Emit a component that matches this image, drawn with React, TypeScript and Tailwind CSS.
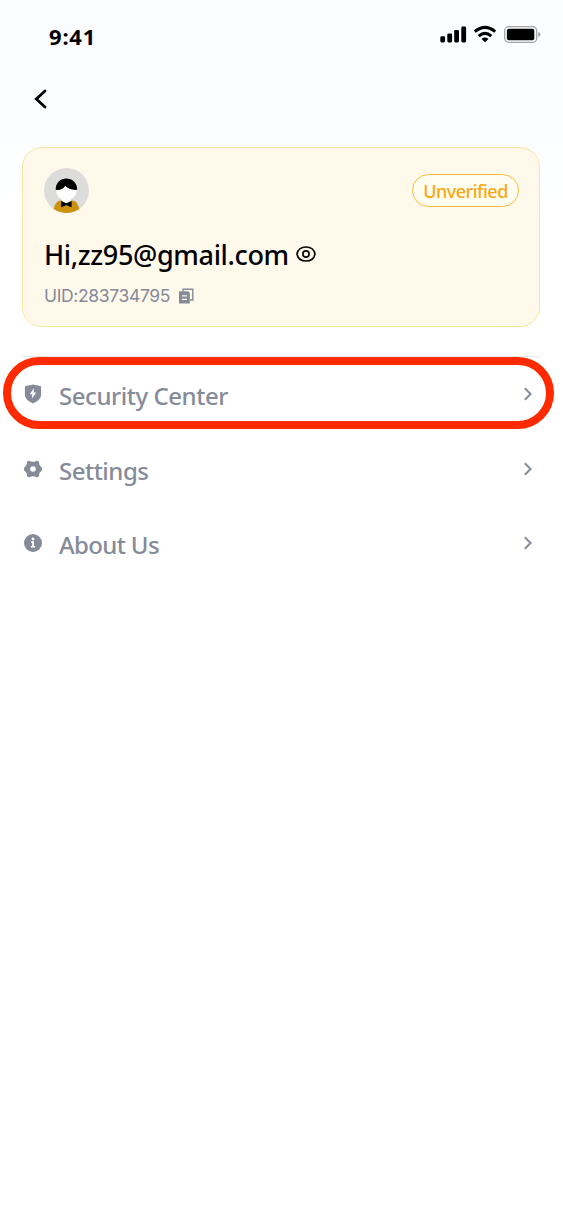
import type { ReactNode } from 'react'

interface MenuItem {
  label: string
  icon: ReactNode
  labelClass: string
  highlighted?: boolean
}

function StatusBar() {
  return (
    <div className="flex h-[72px] items-start justify-between pl-[49px] pr-[22px]">
      <span className="mt-5 font-['Noto_Sans','Liberation_Sans',sans-serif] text-[22px] leading-8 font-bold tracking-[0.8px] text-black">
        9:41
      </span>
      <svg className="mt-6 h-5 w-[101px] shrink-0" viewBox="440 24 101 20">
        <rect x="440.3" y="36.3" width="4.8" height="6.1" rx="1.4" />
        <rect x="447.3" y="33.4" width="4.8" height="9" rx="1.4" />
        <rect x="454.2" y="29.9" width="4.8" height="12.5" rx="1.4" />
        <rect x="461.3" y="26.5" width="4.8" height="15.9" rx="1.4" />
        <path
          d="M474.8 31.6Q485 23.2 495.2 31.6M478.7 36.1Q485 30.6 491.3 36.1"
          fill="none"
          stroke="#000"
          strokeWidth="3.1"
        />
        <path d="M481.5 38.9Q485 36 488.5 38.9L485 42.3Z" />
        <rect x="504.7" y="26.7" width="32" height="15.6" rx="4" fill="none" stroke="#a3a4a6" strokeWidth="1.3" />
        <rect x="506.9" y="28.7" width="27.4" height="11.6" rx="2" />
        <path d="M538.2 31.9Q540.6 32.8 540.6 34.5T538.2 37.1Z" fill="#a3a4a6" />
      </svg>
    </div>
  )
}

function Avatar() {
  return (
    <svg className="h-[45px] w-[45px]" viewBox="0 0 45 45">
      <clipPath id="avatar-clip">
        <circle cx="22.5" cy="22.5" r="22.5" />
      </clipPath>
      <g clipPath="url(#avatar-clip)">
        <rect width="45" height="45" fill="#dcdcda" />
        <path d="M9 45C10 37 12.5 32.6 17 32.6H28C32.5 32.6 35 37 36 45Z" fill="#cb920d" />
        <path d="M18 30H27V32.8L22.5 38L18 32.8Z" fill="#fff" />
        <circle cx="22.3" cy="21.8" r="10.4" fill="#fff" />
        <path d="M11.7 21.8C11.6 15 16.4 10.6 22.3 10.6S33.3 15 33.2 21.8C28.2 22.4 23.8 20.9 21.3 17.8C19.4 21 16.1 22.6 11.7 21.8Z" />
        <path d="M17.2 33L22.4 35.2L27.6 33V39.2L22.4 37.2L17.2 39.2Z" />
      </g>
    </svg>
  )
}

function EyeIcon() {
  return (
    <svg className="-mt-0.5 h-4 w-5" viewBox="0 0 20 16" fill="none" stroke="#080808" strokeWidth="1.7">
      <path d="M1 8C1.9 3.4 5.4 1 10 1S18.1 3.4 19 8C18.1 12.6 14.6 15 10 15S1.9 12.6 1 8Z" />
      <circle cx="10" cy="8" r="3.1" />
    </svg>
  )
}

function CopyIcon() {
  return (
    <svg className="h-4 w-[15px]" viewBox="0 0 15 16">
      <path d="M4 3.5V1.2H13.8V12H11" fill="none" stroke="#858b98" strokeWidth="1.4" />
      <path d="M0 3.3H9.2L10.8 4.9V15.5H0Z" fill="#858b98" />
      <path d="M3 7.8H8M3 11.3H8" stroke="#fff9ec" strokeWidth="1.3" />
    </svg>
  )
}

function ShieldIcon() {
  return (
    <svg className="h-5 w-[18px]" viewBox="0 0 18 20">
      <path
        fill="#858b98"
        d="M9 .4L16.2 2Q17.1 2.2 17.1 3.1V10.2C17.1 14.8 13.7 17.2 9 19.4C4.3 17.2.9 14.8.9 10.2V3.1Q.9 2.2 1.8 2Z"
      />
      <path d="M9.9 4.2L5.7 10.2H8.3L8 14.5L12.3 8.5H9.6Z" fill="#fff" />
    </svg>
  )
}

function GearIcon() {
  return (
    <svg className="h-[18px] w-[18px]" viewBox="0 0 18 18">
      <path
        fill="#858b98"
        fillRule="evenodd"
        d="M4.6.8Q5.6.4 6.2 1.2Q9 2.5 11.8 1.2Q12.4.4 13.4.8L14.6 1.4Q15.4 2 15 3Q15 5.5 17.2 6.9Q18 7.4 18 8.3V9.7Q18 10.6 17.2 11.1Q15 12.5 15 15Q15.4 16 14.6 16.6L13.4 17.2Q12.4 17.6 11.8 16.8Q9 15.5 6.2 16.8Q5.6 17.6 4.6 17.2L3.4 16.6Q2.6 16 3 15Q3 12.5.8 11.1Q0 10.6 0 9.7V8.3Q0 7.4.8 6.9Q3 5.5 3 3Q2.6 2 3.4 1.4ZM9 6.2A2.8 2.8 0 1 0 9 11.8A2.8 2.8 0 1 0 9 6.2Z"
      />
    </svg>
  )
}

function InfoIcon() {
  return (
    <svg className="h-[18px] w-[18px]" viewBox="0 0 18 18">
      <circle cx="9" cy="9" r="9" fill="#858b98" />
      <circle cx="9" cy="5" r="1.4" fill="#fff" />
      <path d="M7 7.3H10V12H11.2V13.6H6.9V12H8.1V8.9H7Z" fill="#fff" />
    </svg>
  )
}

const items: MenuItem[] = [
  { label: 'Security Center', icon: <ShieldIcon />, labelClass: 'tracking-[-0.45px]', highlighted: true },
  { label: 'Settings', icon: <GearIcon />, labelClass: 'tracking-[-0.5px]' },
  { label: 'About Us', icon: <InfoIcon />, labelClass: 'tracking-[-0.65px]' },
]

function MenuRow({ label, icon, labelClass, highlighted }: MenuItem) {
  return (
    <li className="relative flex h-[74.5px] items-center pr-2">
      <span className="flex w-[21px] justify-center">{icon}</span>
      <span
        className={`ml-4 pt-1 font-['Noto_Sans','Liberation_Sans',sans-serif] text-[24px] leading-8 font-medium whitespace-nowrap text-[#858b98] ${labelClass}`}
      >
        {label}
      </span>
      <svg className="ml-auto h-3.5 w-2" viewBox="0 0 8 14" fill="none" stroke="#858b98" strokeWidth="2">
        <path d="M.8 1.2L6.6 7L.8 12.8" />
      </svg>
      {highlighted && (
        <span className="absolute top-0 -right-3.5 -left-[19px] h-[72px] rounded-[36px] border-8 border-[#ff2a00]" />
      )}
    </li>
  )
}

export default function App() {
  return (
    <main className="h-[1220px] w-[563px] overflow-hidden bg-white bg-linear-to-b from-[#fafcff] from-0% via-[#fbfdff] via-10% to-white to-18% font-['Inter','Liberation_Sans',sans-serif]">
      <StatusBar />

      <header className="flex h-[75px] pt-[17px] pl-[34px]">
        <svg className="h-5 w-[13px]" viewBox="0 0 13 20" fill="none" stroke="#000" strokeWidth="2.8" strokeLinecap="round">
          <path d="M11 2L2.3 10L11 18" />
        </svg>
      </header>

      <section className="mr-[23px] ml-[22px] h-[180px] rounded-[20px] border-[1.5px] border-[#fee59e] bg-[#fff9ec] pt-5 pr-5 pl-[21px]">
        <div className="flex items-center justify-between">
          <Avatar />
          <span className="flex h-[33px] w-[107px] items-center justify-center rounded-full border border-[#fdba36] bg-[#fffcf0] pt-0.5 font-['Noto_Sans','Liberation_Sans',sans-serif] text-[18px] font-medium tracking-[-0.5px] text-[#faa70f]">
            Unverified
          </span>
        </div>
        <div className="mt-6 flex h-9 items-center">
          <h1 className="w-[252px] font-['Noto_Sans','Liberation_Sans',sans-serif] text-[27px] leading-9 font-medium tracking-[-0.35px] whitespace-nowrap text-black">
            Hi,zz95@gmail.com
          </h1>
          <EyeIcon />
        </div>
        <div className="mt-[11px] flex h-6 items-center">
          <p className="w-[135px] text-[17.5px] leading-6 font-normal tracking-[-0.35px] whitespace-nowrap text-[#858b98]">
            UID:283734795
          </p>
          <CopyIcon />
        </div>
      </section>

      <ul className="mt-[29px] mr-[23px] ml-[22px] border-t border-[#e8e9eb]">
        {items.map((item) => (
          <MenuRow key={item.label} {...item} />
        ))}
      </ul>
    </main>
  )
}
